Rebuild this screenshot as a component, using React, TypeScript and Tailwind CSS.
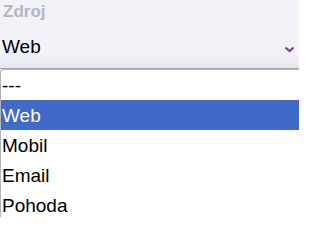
const options = ['---', 'Web', 'Mobil', 'Email', 'Pohoda']

export default function App() {
  const selected = 'Web'

  return (
    <div className="h-[217px] w-[299px] overflow-hidden bg-white font-['Liberation_Sans',Arial,sans-serif]">
      {/* Field */}
      <div className="bg-[#f2f2f8]">
        <div className="px-[3px] pt-[2px] text-[17px] font-bold leading-[20px] text-[#b6b5c4]">Zdroj</div>
        <div className="flex h-[46px] items-start justify-between bg-gradient-to-b from-[#f2f2f8] from-70% to-[#e6e6ee] pl-[2px] pr-[3px] pt-[14px]">
          <span className="text-[19px] leading-[22px] text-black">{selected}</span>
          <svg width="11" height="7" viewBox="0 0 11 7" className="mr-[1px] mt-[10px]">
            <path d="M1.5 1.5 L5.5 5 L9.5 1.5" fill="none" stroke="#8b3d8e" strokeWidth="2.2" />
          </svg>
        </div>
        <div className="h-px bg-[#a3a3ad]" />
      </div>

      {/* Dropdown list */}
      <ul className="rounded-tl-[4px] border-l border-t border-[#b4b4bc] bg-white">
        {options.map((o) => (
          <li
            key={o}
            className={
              o === selected
                ? 'h-[30px] bg-[#4169c9] pl-[1px] pt-[4px] text-[19px] leading-[23px] text-white'
                : 'h-[30px] pl-[1px] pt-[4px] text-[19px] leading-[23px] text-black'
            }
          >
            {o}
          </li>
        ))}
      </ul>
    </div>
  )
}
